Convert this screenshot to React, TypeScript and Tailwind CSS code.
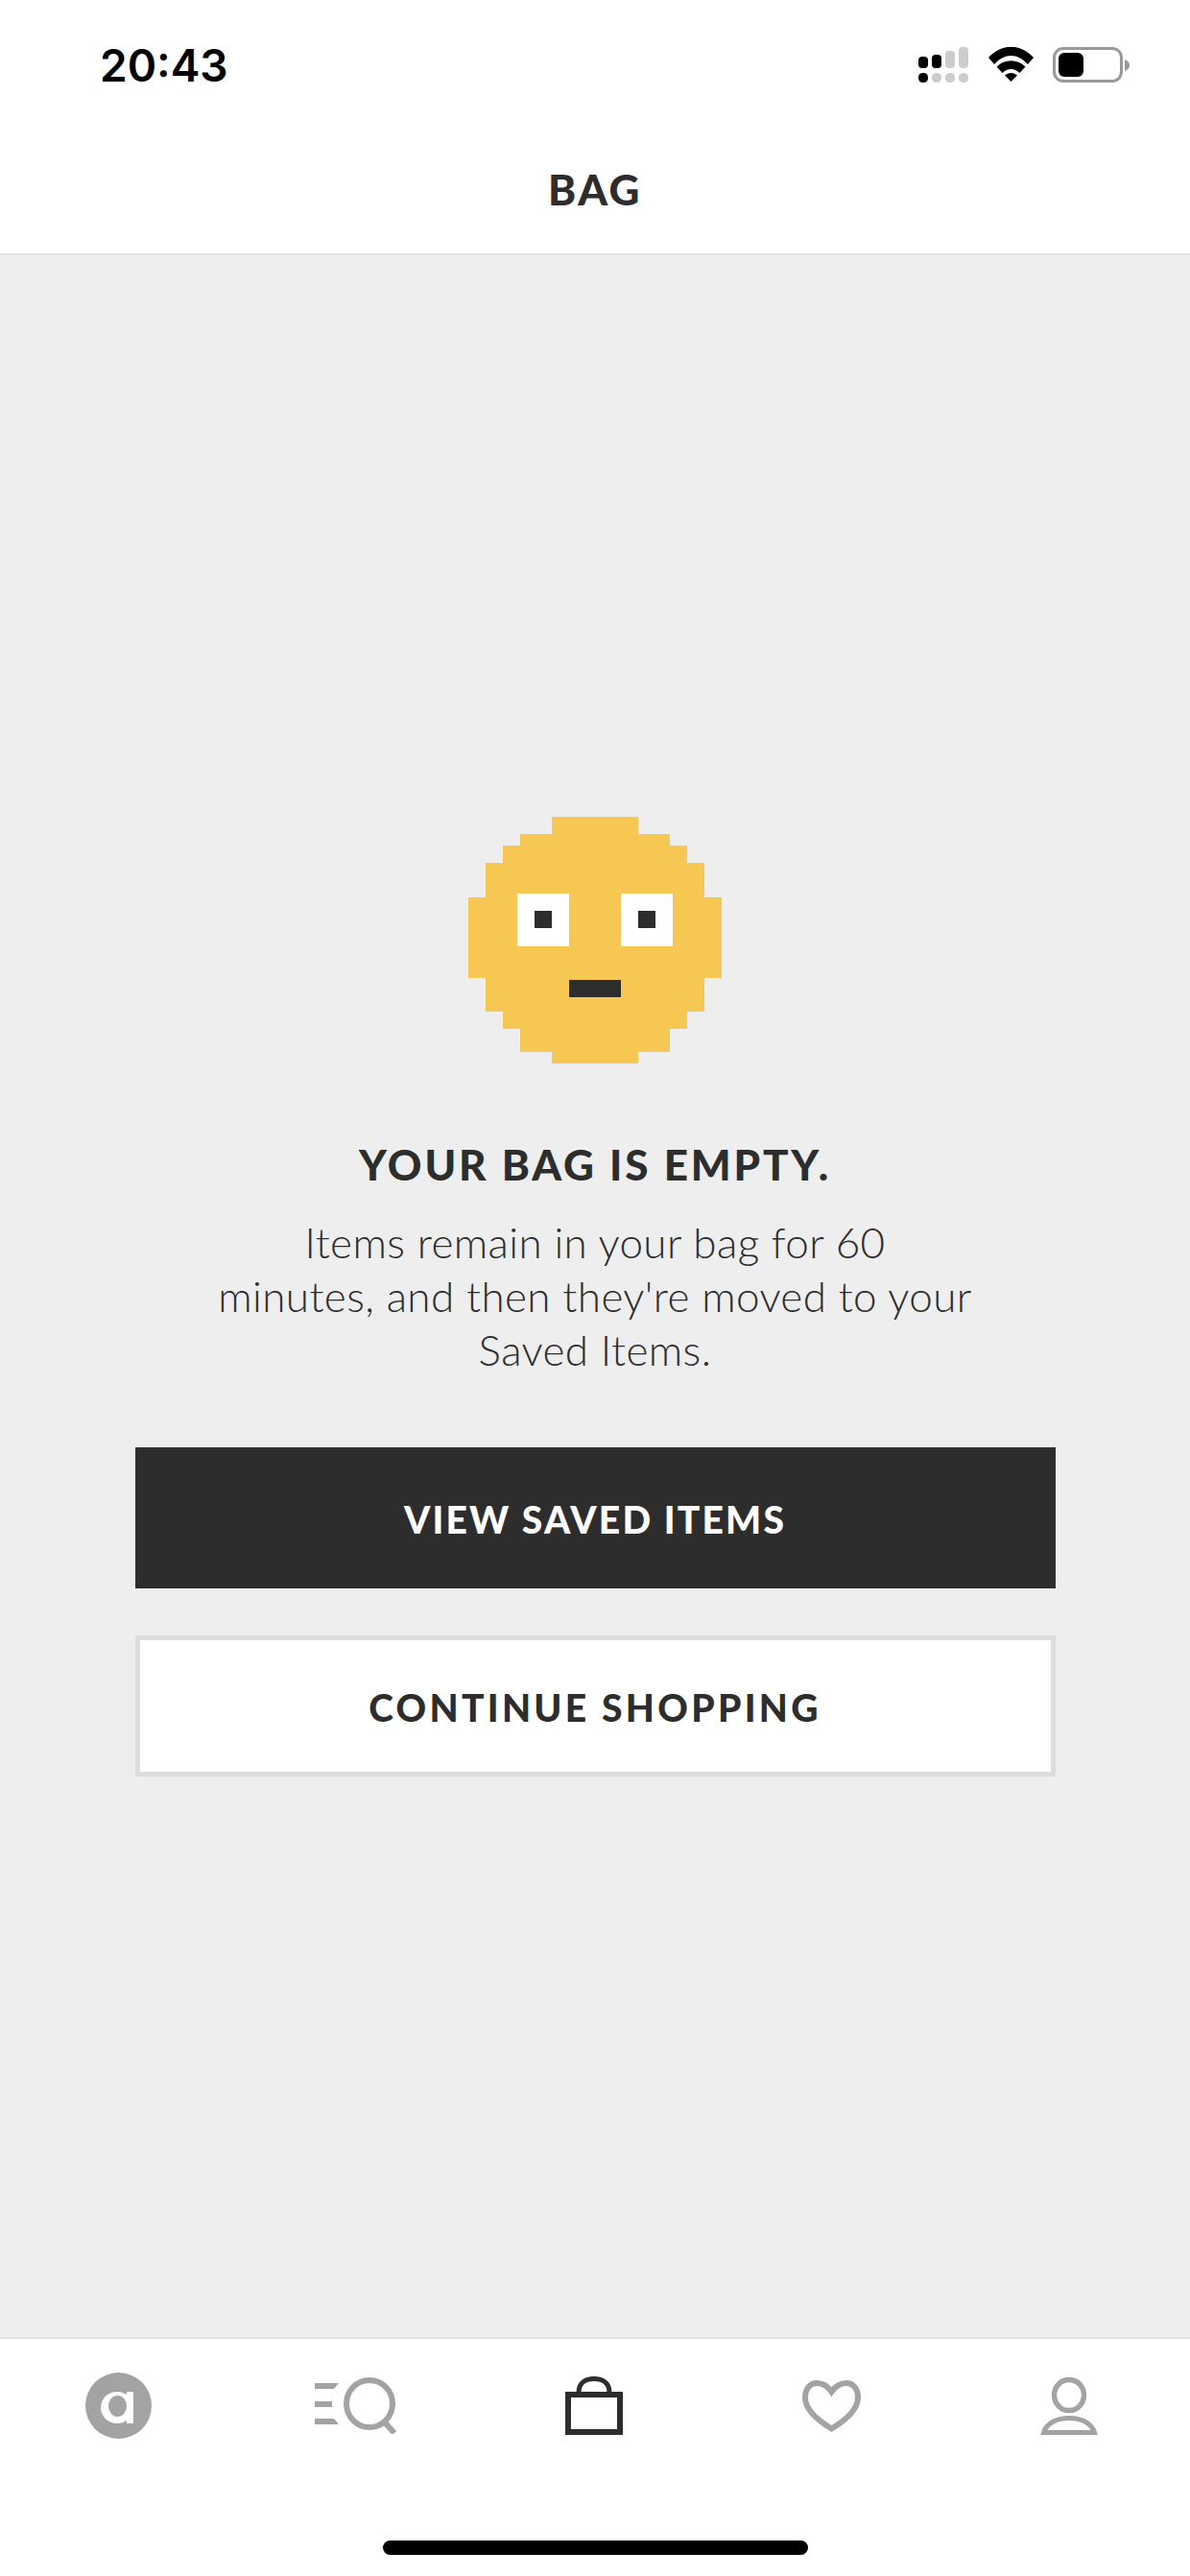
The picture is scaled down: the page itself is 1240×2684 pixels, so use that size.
import React from "react";

const FACE_ROWS = [
  { x: 87, y: 0, w: 90, h: 18 },
  { x: 54, y: 18, w: 156, h: 12 },
  { x: 36, y: 30, w: 192, h: 18 },
  { x: 18, y: 48, w: 228, h: 36 },
  { x: 0, y: 84, w: 264, h: 84 },
  { x: 18, y: 168, w: 228, h: 35 },
  { x: 36, y: 203, w: 192, h: 18 },
  { x: 54, y: 221, w: 156, h: 24 },
  { x: 87, y: 245, w: 90, h: 12 },
];

function PixelFace() {
  return (
    <svg width="264" height="257" viewBox="0 0 264 257" shapeRendering="crispEdges">
      {FACE_ROWS.map((r) => (
        <rect key={r.y} x={r.x} y={r.y} width={r.w} height={r.h} fill="#f6c753" />
      ))}
      <rect x="51" y="80" width="54" height="55" fill="#fff" />
      <rect x="159" y="80" width="54" height="55" fill="#fff" />
      <rect x="69" y="98" width="18" height="18" fill="#2d2d2d" />
      <rect x="177" y="98" width="18" height="18" fill="#2d2d2d" />
      <rect x="105" y="170" width="54" height="18" fill="#2d2d2d" />
    </svg>
  );
}

function Signal() {
  const gray = "#cccccc";
  return (
    <svg width="52" height="37" viewBox="0 0 52 37">
      <rect x="0" y="10" width="10" height="12" rx="4" fill="#000" />
      <rect x="14" y="8" width="10" height="14" rx="4" fill="#000" />
      <rect x="28" y="4" width="10" height="18" rx="4" fill={gray} />
      <rect x="42" y="0" width="10" height="22" rx="4" fill={gray} />
      <rect x="0" y="27" width="10" height="10" rx="4.5" fill="#000" />
      <rect x="14" y="27" width="10" height="10" rx="4.5" fill={gray} />
      <rect x="28" y="27" width="10" height="10" rx="4.5" fill={gray} />
      <rect x="42" y="27" width="10" height="10" rx="4.5" fill={gray} />
    </svg>
  );
}

function Wifi() {
  return (
    <svg width="47" height="36" viewBox="0 0 47 36">
      <path d="M0 11 C14 -4 33 -4 47 11 L41 18 C30 6 17 6 6 18 Z" fill="#000" />
      <path d="M8.5 20.5 C17 12 30 12 38.5 20.5 L32.5 27 C27 21.5 20 21.5 14.5 27 Z" fill="#000" />
      <path d="M17 29.5 C21 26 26 26 30 29.5 L23.5 36 Z" fill="#000" />
    </svg>
  );
}

function Battery() {
  return (
    <div className="flex items-center">
      <div className="flex h-[37px] w-[73px] items-center rounded-[11px] border-[3px] border-[#999999] pl-[3px]">
        <div className="h-[25px] w-[26px] rounded-[6px] bg-black" />
      </div>
      <svg width="6" height="12" viewBox="0 0 6 12" className="ml-[2px]">
        <path d="M0 0 C3 1 5 3 5 6 C5 9 3 11 0 12 Z" fill="#999999" />
      </svg>
    </div>
  );
}

function HomeIcon() {
  return (
    <svg width="69" height="69" viewBox="0 0 69 69">
      <circle cx="34.5" cy="34.5" r="34.5" fill="#a3a3a3" />
      <ellipse cx="33" cy="36.5" rx="17" ry="16.5" fill="#fff" />
      <rect x="43" y="20" width="7" height="33" fill="#fff" />
      <ellipse cx="33.5" cy="35" rx="9.5" ry="11" fill="#a3a3a3" />
    </svg>
  );
}

function SearchIcon() {
  return (
    <svg width="85" height="59" viewBox="0 0 85 59" className="-ml-[2px]">
      <polygon points="0,6 25,6 20,12 0,12" fill="#a3a3a3" />
      <rect x="0" y="25" width="18" height="6" fill="#a3a3a3" />
      <polygon points="0,43 20,43 25,49 0,49" fill="#a3a3a3" />
      <ellipse cx="57" cy="27.5" rx="24" ry="24.5" fill="none" stroke="#a3a3a3" strokeWidth="6" />
      <line x1="72" y1="46" x2="83" y2="58" stroke="#a3a3a3" strokeWidth="6" />
    </svg>
  );
}

function BagIcon() {
  return (
    <svg width="60" height="61" viewBox="0 0 60 61">
      <rect x="3" y="19" width="54" height="39" fill="none" stroke="#2d2d2d" strokeWidth="6" />
      <path d="M14 17 C14 7 21 2.5 30 2.5 C39 2.5 46 7 46 17" fill="none" stroke="#2d2d2d" strokeWidth="5" />
    </svg>
  );
}

function HeartIcon() {
  return (
    <svg width="61" height="54" viewBox="0 0 61 54">
      <path
        d="M30.5 12 C27 7 21 3 15 3 C8 3 3 9 3 18 C3 31 18 43 30.5 50.5 C43 43 58 31 58 18 C58 9 53 3 46 3 C40 3 34 7 30.5 12 Z"
        fill="none"
        stroke="#a3a3a3"
        strokeWidth="6"
      />
    </svg>
  );
}

function PersonIcon() {
  return (
    <svg width="60" height="60" viewBox="0 0 60 60">
      <ellipse cx="30" cy="18.5" rx="15.5" ry="16" fill="none" stroke="#a3a3a3" strokeWidth="5.5" />
      <path d="M3.5 57.5 C7 47 18 42.5 30 42.5 C42 42.5 53 47 56.5 57.5 Z" fill="none" stroke="#a3a3a3" strokeWidth="5" />
    </svg>
  );
}

export default function App() {
  return (
    <div className="flex h-[2684px] w-[1240px] flex-col overflow-hidden bg-[#eeeeee] font-[Lato,sans-serif] text-[#2d2d2d]">
      <header className="h-[265px] shrink-0 border-b border-[#dddddd] bg-white">
        <div className="flex h-[167px] items-start justify-between pt-[49px] pl-[104px] pr-[62px]">
          <span className="font-[Inter,sans-serif] text-[46px] leading-[38px] font-semibold text-black">20:43</span>
          <div className="flex items-start">
            <Signal />
            <div className="ml-[21px]">
              <Wifi />
            </div>
            <div className="ml-[20px]">
              <Battery />
            </div>
          </div>
        </div>
        <h1 className="text-center text-[44px] leading-[60px] font-black tracking-[2.5px]">BAG</h1>
      </header>

      <main className="flex flex-1 flex-col items-center pt-[586px]">
        <PixelFace />
        <h2 className="mt-[75px] text-[44px] leading-[60px] font-black tracking-[2.85px]">YOUR BAG IS EMPTY.</h2>
        <p className="mt-[23px] text-center text-[44px] leading-[56px] font-light tracking-[0.4px]">
          Items remain in your bag for 60
          <br />
          minutes, and then they're moved to your
          <br />
          Saved Items.
        </p>
        <button className="mt-[74px] flex h-[147px] w-[959px] items-center justify-center bg-[#2d2d2d] pt-[3px] text-[39px] font-black tracking-[2.2px] text-white">
          VIEW SAVED ITEMS
        </button>
        <button className="mt-[49px] flex h-[147px] w-[959px] items-center justify-center border-[5px] border-[#dddddd] bg-white pt-[3px] text-[39px] font-black tracking-[3.3px]">
          CONTINUE SHOPPING
        </button>
      </main>

      <nav className="h-[249px] shrink-0 border-t-2 border-[#e2e2e2] bg-white">
        <div className="grid h-[172px] grid-cols-5 items-center justify-items-center pr-[2px] pb-[33px]">
          <HomeIcon />
          <SearchIcon />
          <BagIcon />
          <HeartIcon />
          <PersonIcon />
        </div>
        <div className="flex justify-center pt-[38px]">
          <div className="h-[15px] w-[443px] rounded-full bg-black" />
        </div>
      </nav>
    </div>
  );
}
